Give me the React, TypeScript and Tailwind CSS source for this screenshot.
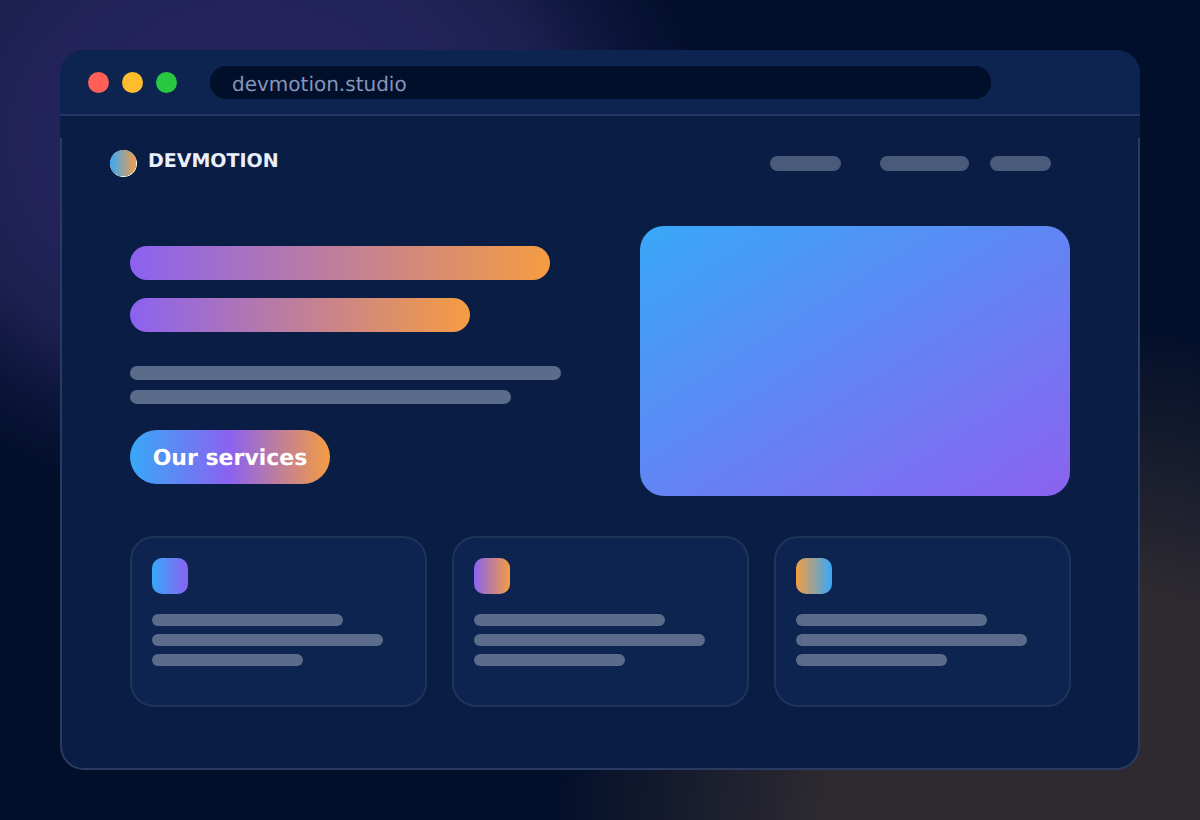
const font = { fontFamily: '"DejaVu Sans", sans-serif' };

const cards = [
  "bg-[linear-gradient(90deg,#38a8f8,#8b62f0)]",
  "bg-[linear-gradient(90deg,#8b62f0,#f59c42)]",
  "bg-[linear-gradient(90deg,#f59c42,#38a8f8)]",
];

const Logo = () => (
  <svg width="27" height="27" viewBox="0 0 27 27" className="shrink-0">
    <defs>
      <linearGradient id="logo-fill" x1="0" y1="0" x2="1" y2="0">
        <stop offset="0" stopColor="#38a8f8" />
        <stop offset="1" stopColor="#f59c42" />
      </linearGradient>
    </defs>
    <circle cx="13.5" cy="13.5" r="13.5" fill="#ffffff" />
    <circle cx="13.3" cy="13.2" r="13.2" fill="url(#logo-fill)" shapeRendering="crispEdges" />
  </svg>
);

const Card = ({ icon }: { icon: string }) => (
  <div className="w-[297px] h-[171px] rounded-[24px] border-2 border-[#20345a] bg-[#0d2350] pl-5 pt-5">
    <div className={`w-9 h-9 rounded-[10px] ${icon}`} />
    <div className="mt-5 flex flex-col gap-2">
      <div className="w-[191px] h-3 rounded-md bg-[#5b6b8a]" />
      <div className="w-[231px] h-3 rounded-md bg-[#5b6b8a]" />
      <div className="w-[151px] h-3 rounded-md bg-[#5b6b8a]" />
    </div>
  </div>
);

export default function App() {
  return (
    <div
      style={font}
      className="w-[1200px] h-[820px] overflow-hidden pt-[50px] pl-[60px] [text-rendering:geometricPrecision] bg-[radial-gradient(ellipse_460px_370px_at_250px_140px,#26245f_0%,#23235b_45%,#1d2050_65%,rgba(16,24,64,0.75)_82%,rgba(2,15,43,0)_100%),radial-gradient(ellipse_530px_510px_at_1080px_830px,#2e2a30_0%,#2e2a30_48%,rgba(46,42,48,0)_100%),linear-gradient(#020f2b,#020f2b)]"
    >
      <div className="w-[1080px] h-[720px] rounded-[24px] border-2 border-[#2a3a62] bg-[#0a1d44]">
        <div className="-mx-0.5 -mt-0.5 bg-[#0a1d44] rounded-t-[24px]">
          <div className="h-[66px] rounded-t-[24px] bg-[#0d2350] border-b-2 border-[#27356a] flex items-start pt-4 pl-7">
            <div className="flex gap-[13px] pt-[5.5px]">
              <div className="w-[21px] h-[21px] rounded-full bg-[#ff5f57]" />
              <div className="w-[21px] h-[21px] rounded-full bg-[#ffbd2e]" />
              <div className="w-[21px] h-[21px] rounded-full bg-[#28c940]" />
            </div>
            <div className="ml-[33px] w-[781px] h-[33px] rounded-[16px] bg-[#020f2b] pl-[22px] text-[20px] leading-[36px] text-[#8496bb]">
              devmotion.studio
            </div>
          </div>
          <div className="h-[22px]" />
        </div>

        <div className="pl-12 pr-[87px] pt-3 flex items-start">
          <Logo />
          <div className="ml-[11px] text-[19px] leading-[22px] font-bold text-[#eaf0fb]">DEVMOTION</div>
          <div className="ml-auto mt-1.5 flex">
            <div className="w-[71px] h-[15px] rounded-lg bg-[#4a5a7a]" />
            <div className="ml-[39px] w-[89px] h-[15px] rounded-lg bg-[#4a5a7a]" />
            <div className="ml-[21px] w-[61px] h-[15px] rounded-lg bg-[#4a5a7a]" />
          </div>
        </div>

        <div className="pl-[68px] pt-[49px] flex">
          <div className="w-[510px] pt-5">
            <div className="w-[420px] h-[34px] rounded-[17px] bg-[linear-gradient(90deg,#8b62f0,#f59c42)]" />
            <div className="mt-[18px] w-[340px] h-[34px] rounded-[17px] bg-[linear-gradient(90deg,#8b62f0,#f59c42)]" />
            <div className="mt-[34px] w-[431px] h-3.5 rounded-[7px] bg-[#5b6b8a]" />
            <div className="mt-2.5 w-[381px] h-3.5 rounded-[7px] bg-[#5b6b8a]" />
            <div className="mt-[26px] w-[200px] h-[54px] pt-0.5 rounded-[27px] bg-[linear-gradient(90deg,#38a8f8,#8b62f0_50%,#f59c42)] flex items-center justify-center text-[22px] font-bold text-white">
              Our services
            </div>
          </div>
          <div className="w-[430px] h-[270px] rounded-[24px] bg-[linear-gradient(148deg,#38a8f8,#8b62f0)]" />
        </div>

        <div className="pl-[68px] pt-10 flex gap-[25px]">
          {cards.map((icon) => (
            <Card key={icon} icon={icon} />
          ))}
        </div>
      </div>
    </div>
  );
}
